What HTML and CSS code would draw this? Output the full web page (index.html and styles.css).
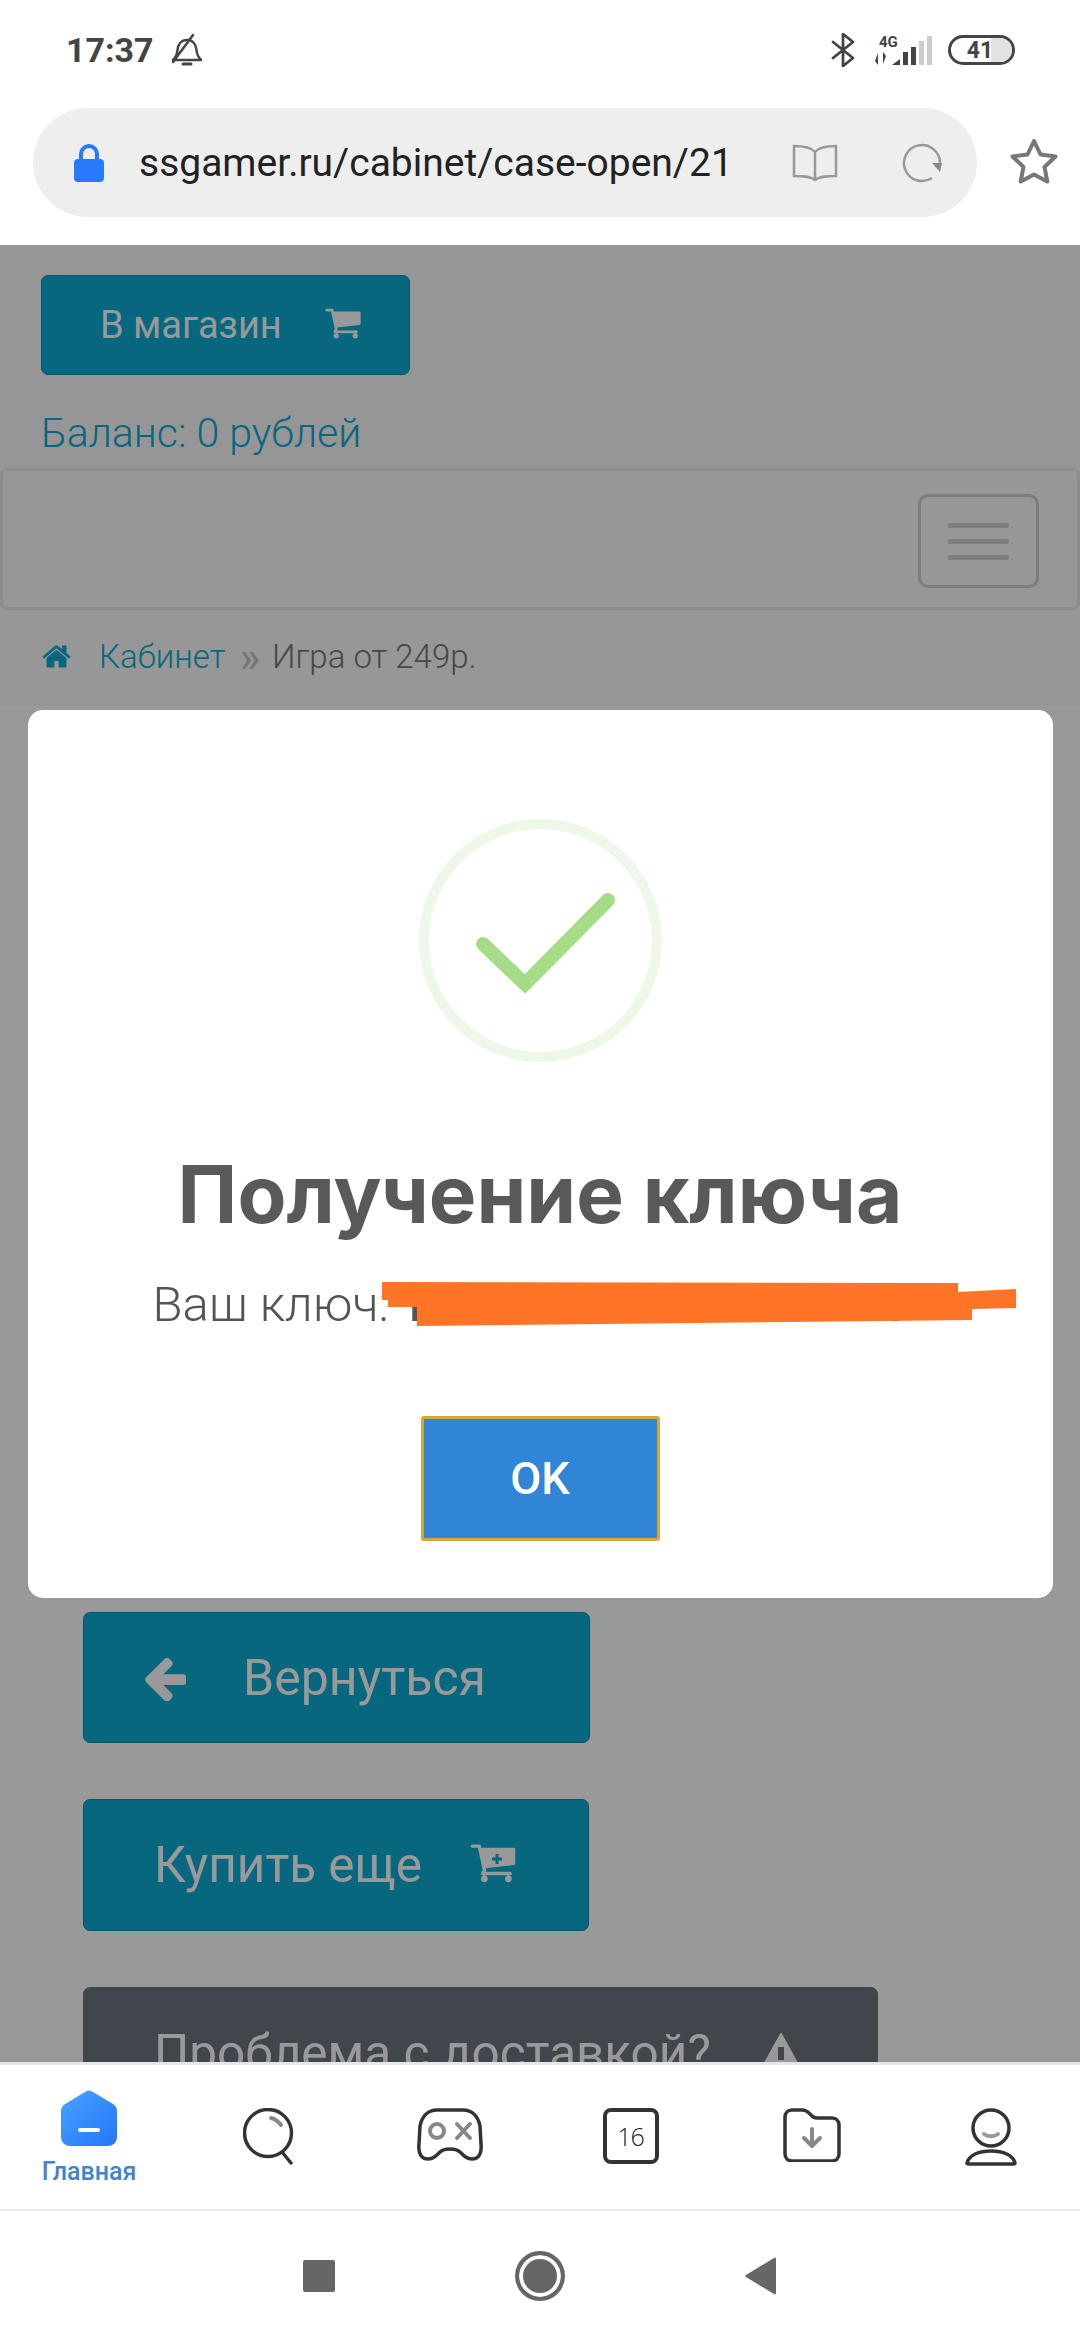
FILE: index.html
```html
<!doctype html>
<html lang="ru">
  <head>
    <meta charset="UTF-8" />
    <title>Получение ключа</title>
    <link rel="stylesheet" href="styles.css">
  </head>
  <body>
    <svg class="defs" width="0" height="0">
      <symbol id="cart" viewBox="0 0 1664 1792">
        <path d="M640 1408q0 52-38 90t-90 38-90-38-38-90 38-90 90-38 90 38 38 90zm896 0q0 52-38 90t-90 38-90-38-38-90 38-90 90-38 90 38 38 90zm128-1088v512q0 24-16.500 42.500t-40.500 21.500l-1044 122q13 60 13 70 0 16-24 64h920q26 0 45 19t19 45-19 45-45 19h-1024q-26 0-45-19t-19-45q0-11 8-31.500t16-36 21.500-40 15.500-29.500l-177-823h-204q-26 0-45-19t-19-45 19-45 45-19h256q16 0 28.500 6.500t19.500 15.500 13 24.500 8 26 5.500 29.500 4.500 26h1201q26 0 45 19t19 45z" />
      </symbol>
    </svg>

    <!-- Status bar -->
    <div class="status-bar">
      <div class="status-left">
        <span class="time">17:37</span>
        <svg class="bell" width="32" height="34" viewBox="0 0 32 34" fill="none" stroke="#444" stroke-width="2.500" stroke-linejoin="round" stroke-linecap="round">
          <path d="M2 27h28c-3-3-4-5-4.500-10-.5-6-4-10-9.500-10S7 11 6.500 17C6 22 5 24 2 27z" />
          <path d="M12 31h8" stroke-width="3" />
          <path d="M22 2L2 29" />
        </svg>
      </div>
      <div class="status-right">
        <svg width="24" height="34" viewBox="0 0 24 34" fill="none" stroke="#444" stroke-width="2.800" stroke-linejoin="round" stroke-linecap="round">
          <path d="M2 9l20 16-10 8V1l10 8L2 25" />
        </svg>
        <div class="signal">
          <span class="net-type">4G</span>
          <svg width="57" height="30" viewBox="0 0 57 30">
            <path d="M3 18v12l-3-4zM8 29V17l3 4z" fill="#444" />
            <path d="M17 30l8-6v6z" fill="#444" />
            <rect x="28" y="17" width="5" height="13" fill="#444" />
            <rect x="36" y="12" width="5" height="18" fill="#444" />
            <rect x="44" y="6" width="5" height="24" fill="#ccc" />
            <rect x="52" y="1" width="5" height="29" fill="#ccc" />
          </svg>
        </div>
        <div class="battery"><span class="battery-level"></span><span class="battery-text">41</span></div>
      </div>
    </div>

    <!-- Browser address row -->
    <div class="browser-row">
      <div class="url-bar">
        <svg width="32" height="38" viewBox="0 0 32 38">
          <path d="M8 16V10a8 8 0 0 1 16 0v6" fill="none" stroke="#2979ff" stroke-width="4" />
          <rect x="1" y="15" width="30" height="23" rx="4" fill="#2979ff" />
        </svg>
        <span class="url-text">ssgamer.ru/cabinet/case-open/21</span>
        <svg class="url-book" width="46" height="38" viewBox="0 0 46 38" fill="none" stroke="#999" stroke-width="2.500">
          <path d="M23 8C19 3 10 2 2 2v30c8 0 16 0 21 4 5-4 13-4 21-4V2c-8 0-17 1-21 6zM23 8v28" />
        </svg>
        <svg class="url-reload" width="40" height="40" viewBox="0 0 40 40" fill="none">
          <path d="M38 20A18 18 0 1 0 30 35" stroke="#999" stroke-width="2.500" />
          <path d="M30 20h10l-2 9z" fill="#888" />
        </svg>
      </div>
      <svg class="star" width="48" height="46" viewBox="0 0 48 46" fill="none" stroke="#777" stroke-width="4" stroke-linejoin="round">
        <path d="M24 3l6.500 13.500 15 2-11 10.500 2.800 14.500L24 36.500 10.700 43.500l2.800-14.500L2.500 18.500l15-2z" />
      </svg>
    </div>

    <!-- Page behind the dialog -->
    <main class="page">
      <div class="page-top">
        <a class="btn btn-shop">В магазин
          <svg width="36" height="38"><use href="#cart" /></svg>
        </a>
        <p class="balance">Баланс: 0 рублей</p>
      </div>

      <nav class="navbar">
        <div class="toggler"><span></span><span></span><span></span></div>
      </nav>

      <div class="breadcrumb">
        <svg width="31" height="31" viewBox="0 0 1792 1792" fill="#0aacd4">
          <path d="M1472 992v480q0 26-19 45t-45 19h-384v-384h-256v384h-384q-26 0-45-19t-19-45v-480q0-1 .5-3t.5-3l575-474 575 474q1 2 1 6zm223-69l-62 74q-8 9-21 11h-3q-13 0-21-7l-692-577-692 577q-12 8-24 7-13-2-21-11l-62-74q-8-10-7-23.500t11-21.500l719-599q32-26 76-26t76 26l244 204v-195q0-14 9-23t23-9h192q14 0 23 9t9 23v408l219 182q10 8 11 21.500t-7 23.500z" />
        </svg>
        <a class="crumb-link">Кабинет</a>
        <span class="crumb-sep">»</span>
        <span class="crumb-current">Игра от 249р.</span>
      </div>

      <div class="actions">
        <a class="btn btn-back">
          <svg width="42" height="46" viewBox="150 250 1500 1300"><path d="M1664 896v128q0 53-32.500 90.500t-84.500 37.500h-704l293 294q38 36 38 90t-38 90l-75 76q-37 37-90 37-52 0-91-37l-651-652q-37-37-37-90 0-52 37-91l651-650q38-38 91-38 52 0 90 38l75 74q38 38 38 91t-38 91l-293 293h704q52 0 84.500 37.500t32.500 90.500z" /></svg>
          Вернуться
        </a>
        <a class="btn btn-more">Купить еще
          <svg class="cart-plus" width="46" height="48" viewBox="0 0 46 48">
            <use href="#cart" width="46" height="48" />
            <path d="M27 13v10M22 18h10" stroke="#0aacd4" stroke-width="3" />
          </svg>
        </a>
        <a class="btn btn-problem">Проблема с доставкой?
          <svg width="44" height="40" viewBox="0 0 44 40">
            <path d="M22 1l21 38H1z" stroke="#fff" stroke-width="2" stroke-linejoin="round" />
            <path d="M22 14v13M22 31v4" stroke="#6c757d" stroke-width="6" />
          </svg>
        </a>
      </div>

      <!-- Dialog -->
      <div class="overlay">
        <div class="modal">
          <div class="success-ring">
            <svg width="150" height="120" viewBox="-3 -4 150 120" fill="none" stroke="#a5dc86" stroke-width="14" stroke-linecap="round" stroke-linejoin="miter">
              <path d="M15 60l42 40 83-84" />
            </svg>
          </div>
          <h2 class="modal-title">Получение ключа</h2>
          <div class="modal-key">
            <p class="modal-text">Ваш ключ: <b class="key-value">TXXXX-XXXXX-XXXXX</b></p>
            <svg class="scribble" width="634" height="44" viewBox="0 0 634 44">
              <path d="M0 0L576 1V10L634 7V26L590 27V38L35 44V25H6V18H0z" fill="#ff7426" />
            </svg>
          </div>
          <button class="modal-ok">OK</button>
        </div>
      </div>
    </main>

    <!-- App tab bar -->
    <div class="tab-bar">
      <div class="tab tab-active">
        <svg width="56" height="56" viewBox="0 0 56 56">
          <defs>
            <linearGradient id="homeFill" x1="0" y1="0" x2="1" y2="1">
              <stop offset="0" stop-color="#4aa3ff" />
              <stop offset="1" stop-color="#2275fb" />
            </linearGradient>
          </defs>
          <path d="M24 2c2.500-2 5.500-2 8 0l20 12c3 2 4 4 4 7v26c0 5-4 9-9 9H9c-5 0-9-4-9-9V21c0-3 1-5 4-7z" fill="url(#homeFill)" />
          <rect x="17" y="38" width="22" height="4" rx="2" fill="#fff" />
        </svg>
        <span class="tab-label">Главная</span>
      </div>
      <div class="tab">
        <svg width="52" height="58" viewBox="0 0 52 58" fill="none" stroke="#333" stroke-width="3.500" stroke-linecap="round">
          <circle cx="25" cy="25" r="23.500" />
          <path d="M39 44l9 11" />
          <path d="M28 10c4 1 7 3 10 7" stroke="#888" stroke-width="4" />
        </svg>
      </div>
      <div class="tab">
        <svg width="66" height="54" viewBox="0 0 66 54" fill="none" stroke="#333" stroke-width="3.500" stroke-linecap="round">
          <path d="M20 2h26c9 0 15 6 17 16l1 18c1 9-2 15-9 15-5 0-8-3-12-7-3-3-6-3-10-3s-7 0-10 3c-4 4-7 7-12 7-7 0-10-6-9-15l1-18C5 8 11 2 20 2z" />
          <circle cx="20" cy="23" r="7" stroke="#888" stroke-width="4" />
          <path d="M40 16l13 14M53 16L40 30" stroke="#888" stroke-width="4" />
        </svg>
      </div>
      <div class="tab">
        <div class="calendar">16</div>
      </div>
      <div class="tab">
        <svg width="58" height="54" viewBox="0 0 58 54" fill="none" stroke="#333" stroke-width="3.500" stroke-linejoin="round">
          <path d="M2 9c0-4 3-7 7-7h10c3 0 5 1 7 3l3 3c1 1 3 2 5 2h15c4 0 7 3 7 7v29c0 4-3 7-7 7H9c-4 0-7-3-7-7z" />
          <path d="M29 21v17M21 30l8 8 8-8" stroke="#888" stroke-width="4" stroke-linecap="round" />
        </svg>
      </div>
      <div class="tab">
        <svg width="52" height="58" viewBox="0 0 52 58" fill="none" stroke="#333" stroke-width="3.500" stroke-linecap="round">
          <circle cx="26" cy="20" r="18" />
          <path d="M19 26c4 3 10 3 14 0" stroke="#999" stroke-width="4" />
          <path d="M2 55c2-8 12-12 24-12s22 4 24 12c0 1-1 1-2 1H4c-1 0-2 0-2-1z" />
        </svg>
      </div>
    </div>

    <!-- System navigation -->
    <div class="system-nav">
      <span class="nav-square"></span>
      <span class="nav-home"></span>
      <svg width="32" height="38" viewBox="0 0 32 38"><path d="M31 2v34c0 1-1 2-2 1L1 20c-1-.5-1-1.500 0-2L29 1c1-1 2 0 2 1z" fill="#666" /></svg>
    </div>
  </body>
</html>
```

FILE: styles.css
```css
/* Phone frame */
html,
body {
  margin: 0;
  padding: 0;
}

body {
  width: 1080px;
  height: 2340px;
  overflow: hidden;
  font-family: Roboto, "Noto Sans", sans-serif;
  background-color: #fff;
  display: flex;
  flex-direction: column;
}

.defs {
  position: absolute;
}

/* Status bar */
.status-bar {
  height: 100px;
  padding: 0 65px 0 66px;
  display: flex;
  align-items: center;
  justify-content: space-between;
  flex: none;
}

.status-left,
.status-right {
  display: flex;
  align-items: center;
}

.time {
  font-size: 34px;
  font-weight: 700;
  color: #444;
}

.bell {
  margin-left: 17px;
}

.signal {
  margin-left: 20px;
  width: 57px;
  position: relative;
  height: 30px;
  display: flex;
}

.net-type {
  position: absolute;
  left: 4px;
  top: -1px;
  font-size: 15px;
  line-height: 16px;
  font-weight: 700;
  color: #444;
}

.battery {
  position: relative;
  margin-left: 16px;
  width: 67px;
  height: 30px;
  box-sizing: border-box;
  padding-right: 3px;
  border: 3px solid #444;
  border-radius: 15px;
  overflow: hidden;
  display: flex;
  align-items: center;
  justify-content: center;
}

.battery-level {
  position: absolute;
  right: 0;
  top: 0;
  bottom: 0;
  width: 21px;
  background-color: #e2e2e2;
}

.battery-text {
  position: relative;
  font-size: 23px;
  font-weight: 700;
  color: #444;
}

/* Address row */
.browser-row {
  height: 145px;
  flex: none;
  padding: 8px 0 0 33px;
  box-sizing: border-box;
  display: flex;
  align-items: flex-start;
}

.url-bar {
  width: 944px;
  height: 109px;
  flex: none;
  box-sizing: border-box;
  border-radius: 55px;
  background-color: #eee;
  padding: 0 34px 0 40px;
  display: flex;
  align-items: center;
}

.url-text {
  margin-left: 34px;
  font-size: 39px;
  color: #222;
  width: 598px;
  flex: none;
  white-space: nowrap;
}

.url-book {
  margin-left: 55px;
  flex: none;
}

.url-reload {
  margin-left: 64px;
  flex: none;
}

.star {
  margin: 30px 0 0 33px;
  flex: none;
}

/* Page behind the dialog */
.page {
  position: relative;
  height: 1817px;
  flex: none;
  overflow: hidden;
  background-color: #fff;
}

.page-top {
  padding: 30px 41px 0;
  height: 223px;
  box-sizing: border-box;
  background-color: #fbfbfb;
}

.btn {
  display: flex;
  align-items: center;
  box-sizing: border-box;
  border: 1px solid #0991b3;
  border-radius: 7px;
  background-color: #0aacd4;
  color: #fff;
  fill: #fff;
  font-size: 36px;
}

.btn-shop {
  width: 369px;
  height: 100px;
  padding-left: 58px;
  gap: 43px;
  font-size: 38px;
}

.balance {
  margin: 35px 0 0;
  font-size: 41px;
  line-height: 46px;
  font-weight: 300;
  color: #0aacd4;
}

.navbar {
  height: 142px;
  box-sizing: border-box;
  border: 3px solid #ececec;
  border-radius: 6px;
  background-color: #fcfcfc;
  padding: 23px 38px 0 0;
  display: flex;
  justify-content: flex-end;
  align-items: flex-start;
}

.toggler {
  width: 121px;
  height: 94px;
  box-sizing: border-box;
  border: 3px solid #d0d0d0;
  border-radius: 10px;
  display: flex;
  flex-direction: column;
  align-items: center;
  justify-content: center;
  gap: 11px;
}

.toggler span {
  display: block;
  width: 61px;
  height: 5px;
  border-radius: 2px;
  background-color: #d0d0d0;
}

.breadcrumb {
  height: 95px;
  box-sizing: border-box;
  padding-left: 41px;
  border-bottom: 2px solid #f5f5f5;
  background-color: #fcfcfc;
  display: flex;
  align-items: center;
  font-size: 33px;
  font-weight: 300;
}

.crumb-link {
  margin-left: 27px;
  color: #0aacd4;
}

.crumb-sep {
  margin: 0 12px 0 14px;
  font-size: 44px;
  line-height: 40px;
  font-weight: 400;
  color: #c4c4c4;
}

.crumb-current {
  color: #777;
}

.actions {
  padding: 907px 0 0 83px;
  display: flex;
  flex-direction: column;
  align-items: flex-start;
  gap: 56px;
}

.btn-back {
  width: 507px;
  height: 131px;
  padding-left: 60px;
  gap: 57px;
  font-size: 50px;
  white-space: nowrap;
}

.btn-more {
  width: 506px;
  height: 132px;
  padding-left: 70px;
  gap: 48px;
  font-size: 49.500px;
}

.btn-problem {
  width: 795px;
  height: 132px;
  padding-left: 70px;
  gap: 48px;
  font-size: 49.500px;
  background-color: #6c757d;
  border-color: #6c757d;
}

/* Dialog */
.overlay {
  position: absolute;
  inset: 0;
  background-color: rgba(0, 0, 0, 0.4);
  display: flex;
  align-items: center;
  justify-content: center;
}

.modal {
  width: 1025px;
  height: 888px;
  box-sizing: border-box;
  border-radius: 15px;
  background-color: #fff;
  padding-top: 109px;
  display: flex;
  flex-direction: column;
  align-items: center;
}

.success-ring {
  width: 243px;
  height: 243px;
  box-sizing: border-box;
  border: 10px solid #eef8e8;
  border-radius: 50%;
  display: flex;
  align-items: center;
  justify-content: center;
}

.modal-title {
  margin: 84px 0 0;
  font-family: Inter, Roboto, sans-serif;
  font-size: 80px;
  line-height: 96px;
  font-weight: 700;
  color: #595959;
}

.modal-key {
  position: relative;
  align-self: stretch;
  margin-top: 31px;
  padding-left: 125px;
}

.modal-text {
  margin: 0;
  font-size: 49px;
  line-height: 64px;
  font-weight: 300;
  color: #545454;
  white-space: nowrap;
}

.key-value {
  font-weight: 700;
}

.scribble {
  position: absolute;
  left: 354px;
  top: 9px;
}

.modal-ok {
  margin-top: 79px;
  width: 239px;
  height: 125px;
  box-sizing: border-box;
  border: 3px solid #d3a73a;
  border-radius: 3px;
  background-color: #3085d6;
  color: #fff;
  font-family: Roboto, sans-serif;
  font-size: 45px;
  font-weight: 500;
}

/* App tab bar */
.tab-bar {
  height: 149px;
  flex: none;
  box-sizing: border-box;
  border-top: 3px solid #e6e6e6;
  border-bottom: 2px solid #e6e6e6;
  display: grid;
  grid-template-columns: 178px repeat(4, 1fr) 178px;
  padding-top: 25px;
}

.tab {
  display: flex;
  flex-direction: column;
  align-items: center;
  justify-content: flex-start;
  padding-top: 18px;
}

.tab-active {
  padding-top: 0;
  gap: 12px;
}

.tab-label {
  font-size: 25px;
  line-height: 28px;
  font-weight: 500;
  color: #4285c8;
}

.calendar {
  width: 56px;
  height: 56px;
  box-sizing: border-box;
  border: 4px solid #333;
  border-radius: 8px;
  font-family: "Open Sans", sans-serif;
  font-size: 25px;
  line-height: 48px;
  font-weight: 300;
  letter-spacing: -1px;
  text-align: center;
  color: #222;
}

/* System navigation */
.system-nav {
  flex: 1;
  display: flex;
  align-items: center;
  justify-content: center;
  gap: 180px;
}

.nav-square {
  width: 32px;
  height: 32px;
  border-radius: 2px;
  background-color: #666;
}

.nav-home {
  width: 50px;
  height: 50px;
  box-sizing: border-box;
  border: 4px solid #666;
  border-radius: 50%;
  background-color: #666;
  box-shadow: inset 0 0 0 4px #fff;
}
```
